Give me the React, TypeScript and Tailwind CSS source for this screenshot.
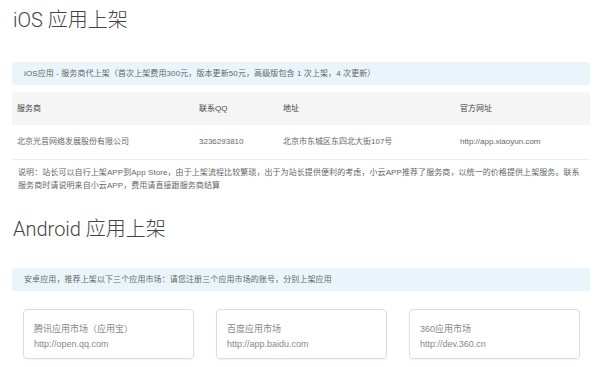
const sans = "font-['Liberation_Sans','Noto_Sans_CJK_SC',sans-serif]";

const stores = [
  { name: "腾讯应用市场（应用宝）", url: "http://open.qq.com" },
  { name: "百度应用市场", url: "http://app.baidu.com" },
  { name: "360应用市场", url: "http://dev.360.cn" },
];

function Title({ children }: { children: React.ReactNode }) {
  return (
    <h2 className="text-[20px] leading-[22px] font-light text-[#444] font-['Roboto','Noto_Sans_CJK_SC',sans-serif] pl-[1px]">
      {children}
    </h2>
  );
}

function Notice({ children }: { children: React.ReactNode }) {
  return (
    <div className="h-[23px] flex items-center rounded-[3px] bg-[#eaf5fb] px-3 text-[8px] tracking-[0.1px] text-[#666]">
      {children}
    </div>
  );
}

export default function App() {
  return (
    <div className={`w-[600px] h-[367px] overflow-hidden bg-white pl-3 pr-[10px] ${sans}`}>
      <div className="pt-[9px]">
        <Title>iOS 应用上架</Title>
      </div>

      <div className="mt-[31px]">
        <Notice>
          iOS应用 - 服务商代上架（首次上架费用300元，版本更新50元，高级版包含 1 次上架，4 次更新）
        </Notice>
      </div>

      <div className="mt-[7px] text-[8px] text-[#666]">
        <div className="flex h-[33px] items-center rounded-t-[4px] bg-[#f5f5f5] pl-[5px] text-[#444]">
          <div className="w-[182px]">服务商</div>
          <div className="w-[84px]">联系QQ</div>
          <div className="w-[177px]">地址</div>
          <div>官方网址</div>
        </div>
        <div className="flex h-[35px] items-center border-b border-[#eee] pl-[5px]">
          <div className="w-[182px]">北京光音网络发展股份有限公司</div>
          <div className="w-[84px]">3236293810</div>
          <div className="w-[177px]">北京市东城区东四北大街107号</div>
          <div>http://app.xiaoyun.com</div>
        </div>
        <p className="mt-[6px] pl-[6px] w-[572px] leading-[13px] tracking-[0.08px]">
          说明：站长可以自行上架APP到App Store，由于上架流程比较繁琐，出于为站长提供便利的考虑，小云APP推荐了服务商，以统一的价格提供上架服务。联系服务商时请说明来自小云APP，费用请直接跟服务商结算
        </p>
      </div>

      <div className="mt-[26px]">
        <Title>Android 应用上架</Title>
      </div>

      <div className="mt-[28px]">
        <Notice>安卓应用，推荐上架以下三个应用市场：请您注册三个应用市场的账号，分别上架应用</Notice>
      </div>

      <div className="mt-[18px] flex gap-[22px] pl-[11px]">
        {stores.map((s) => (
          <div
            key={s.name}
            className="w-[171px] h-[50px] rounded-[4px] border border-[#ddd] shadow-[0_1px_2px_rgba(0,0,0,0.06)] px-[10px] pt-[12px] text-[9px] leading-[15px] text-[#888]"
          >
            <div>{s.name}</div>
            <div>{s.url}</div>
          </div>
        ))}
      </div>
    </div>
  );
}
